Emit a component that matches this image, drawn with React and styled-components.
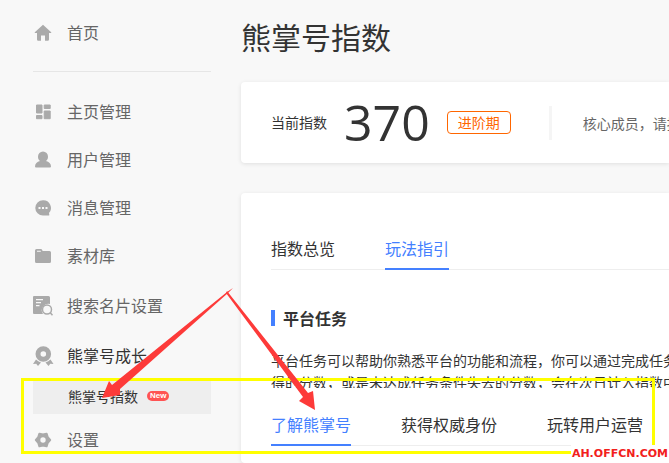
import React from 'react'
import styled, { createGlobalStyle } from 'styled-components'

const GlobalStyle = createGlobalStyle`
  * { box-sizing: border-box; }
  body {
    margin: 0;
    background: #f8f8f8;
    color: #333;
    font-family: 'Noto Sans CJK SC', sans-serif;
    font-size: 16px;
    overflow: hidden;
  }
  button { font: inherit; color: inherit; background: none; border: 0; padding: 0; cursor: pointer; }
  a { color: inherit; text-decoration: none; }
`

const icons = {
  home: <path d="M10 1.800 1.800 9.200q-.4.8.6.9H4v6.400q0 1.300 1.300 1.300H8v-5.300h4v5.300h2.700q1.300 0 1.300-1.300v-6.400h1.600q1-.1.6-.9Z" />,
  board: (
    <path
      stroke="#aaa"
      strokeLinejoin="round"
      d="M3.500 3h5.500v8h-5.500zM11.200 3h6v3.500h-6zM3.500 13.500h5.500v3.200h-5.500zM11.200 9h6v7.700h-6z"
    />
  ),
  user: <path d="M10 1.500a5 5 0 0 1 5 5.200c0 2-.8 3.500-2 4.300 3 .7 5 2.700 5 5.500q0 1-1 1H3q-1 0-1-1c0-2.800 2-4.800 5-5.500-1.200-.8-2-2.300-2-4.300a5 5 0 0 1 5-5.200Z" />,
  message: (
    <>
      <path d="M10 2.200a7.700 7.700 0 1 0 0 15.400h5.800q.8 0 .5-.8l-.3-1.800A7.700 7.700 0 0 0 10 2.200Z" />
      <path fill="#f8f8f8" d="M5.500 9h2v2h-2zM9 9h2v2H9zM12.500 9h2v2h-2z" />
    </>
  ),
  folder: (
    <>
      <path d="M3.500 3h4.300q1 0 1.400 1l.4 1H16.500Q18 5 18 6.500v9q0 1.500-1.500 1.500h-13Q2 17 2 15.500v-11Q2 3 3.500 3Z" />
      <path fill="#f8f8f8" d="M4 4.700h3.500l.5 1H4z" />
    </>
  ),
  search: (
    <>
      <path d="M1 0h14.500q1.500 0 1.500 1.500V8a6.500 6.500 0 0 0-7 10H1q-1 0-1-1V1q0-1 1-1Z" />
      <path fill="#f8f8f8" d="M3 3h7v1.300H3zM3 6h5v1.300H3zM3 9h3.500v1.300H3z" />
      <circle cx="14" cy="13.500" r="4.500" fill="none" stroke="#aaa" strokeWidth="1.500" />
      <path fill="none" stroke="#aaa" strokeWidth="1.500" d="m17.300 16.800 2.200 2.400" />
    </>
  ),
  medal: (
    <>
      <circle cx="10.300" cy="8" r="5.300" fill="none" stroke="#aaa" strokeWidth="5" />
      <path d="M3 13.500 0 18l3.200-.2L5 20l3-3.500q-3-.8-5-3ZM17.500 13.500l3 4.500-3.200-.2L15.500 20l-3-3.500q3-.8 5-3Z" />
    </>
  ),
  gear: (
    <>
      <path
        stroke="#aaa"
        strokeWidth="2.400"
        strokeLinejoin="round"
        d="M17 10 14.600 12.600 13.500 16.100 10 15.300 6.500 16.100 5.400 12.600 3 10 5.400 7.400 6.500 3.900 10 4.700 13.500 3.900 14.600 7.400Z"
      />
      <circle cx="10" cy="10" r="2.700" fill="#f8f8f8" />
    </>
  ),
}

const menu = [
  { icon: 'board', label: '主页管理' },
  { icon: 'user', label: '用户管理' },
  { icon: 'message', label: '消息管理' },
  { icon: 'folder', label: '素材库' },
  { icon: 'search', label: '搜索名片设置', tall: true },
  { icon: 'medal', label: '熊掌号成长', open: true },
]

function NavItem({ icon, label, tall, open }) {
  return (
    <NavLink href="#" $tall={tall} $open={open}>
      <NavIcon viewBox="0 0 20 20" aria-hidden="true">{icons[icon]}</NavIcon>
      <NavText>{label}</NavText>
    </NavLink>
  )
}

function Tabs({ items, active }) {
  return (
    <TabBar>
      {items.map((item) => (
        <Tab key={item} $active={item === active}>{item}</Tab>
      ))}
    </TabBar>
  )
}

function App() {
  return (
    <Page>
      <GlobalStyle />
      <Sidebar>
        <NavItem icon="home" label="首页" />
        <Divider />
        {menu.map((item) => <NavItem key={item.label} {...item} />)}
        <SubLink href="#">熊掌号指数<NewTag>New</NewTag></SubLink>
        <NavItem icon="gear" label="设置" tall />
      </Sidebar>
      <Main>
        <Title>熊掌号指数</Title>
        <ScoreCard>
          <Label>当前指数</Label>
          <Score>370</Score>
          <Stage>进阶期</Stage>
          <Member>核心成员，请按</Member>
        </ScoreCard>
        <GuideCard>
          <Tabs items={['指数总览', '玩法指引']} active="玩法指引" />
          <SectionTitle>平台任务</SectionTitle>
          <Intro>
            平台任务可以帮助你熟悉平台的功能和流程，你可以通过完成任务<br />
            得的分数，或是未达成任务条件失去的分数，会在次日计入指数中
          </Intro>
          <Tabs items={['了解熊掌号', '获得权威身份', '玩转用户运营']} active="了解熊掌号" />
        </GuideCard>
      </Main>
      <Highlight />
      <Arrows viewBox="0 0 240 140" aria-hidden="true">
        <path d="M133 8 127 12 12 105 9 101 2 118 20 115 20 109 128 13Z" />
        <path d="M127 11 126 13 203 117 199 121 215 130 213 111 208 113Z" />
      </Arrows>
      <Watermark>AH.OFFCN.COM</Watermark>
    </Page>
  )
}

const Page = styled.div`
  position: relative;
  display: flex;
  height: 100vh;
  overflow: hidden;
`

const Sidebar = styled.nav`
  flex: 0 0 211px;
  padding: 9px 0 0 33px;
`

const NavLink = styled.a`
  display: flex;
  align-items: center;
  gap: 14px;
  height: ${(p) => (p.$tall ? 52 : 48)}px;
  color: ${(p) => (p.$open ? '#333' : '#666')};
`

const NavIcon = styled.svg`
  width: 20px;
  height: 20px;
  fill: #aaa;
  overflow: visible;
`

const NavText = styled.span`
  padding-bottom: 2px;
`

const Divider = styled.hr`
  margin: 14px 0 16px;
  border: 0;
  border-top: 1px solid #e6e6e6;
`

const SubLink = styled.a`
  display: flex;
  align-items: center;
  gap: 9px;
  height: 34px;
  padding: 0 0 2px 35px;
  background: #eee;
  font-size: 14px;
`

const NewTag = styled.span`
  padding: 0 3px;
  border-radius: 5px;
  background: #ff5353;
  color: #fff;
  font: bold 8px/10px 'Liberation Sans', sans-serif;
`

const Main = styled.main`
  flex: 1;
  display: flex;
  flex-direction: column;
  min-width: 0;
  padding-left: 30px;
  white-space: nowrap;
`

const Title = styled.h1`
  margin: 14px 0 24px;
  font-size: 30px;
  font-weight: 400;
  line-height: 44px;
`

const Card = styled.section`
  padding-left: 30px;
  border-radius: 4px 0 0 4px;
  background: #fff;
  box-shadow: 0 1px 4px rgba(0, 0, 0, 0.1);
`

const ScoreCard = styled(Card)`
  display: flex;
  align-items: center;
  height: 81px;
  margin-bottom: 30px;
  font-size: 14px;
`

const Label = styled.span`
  margin-right: 17px;
  padding-bottom: 2px;
`

const Score = styled.strong`
  margin-right: 17px;
  padding-bottom: 2px;
  font: 400 50px/78px 'Open Sans', sans-serif;
`

const Stage = styled.span`
  padding: 0 10px;
  border: 1px solid #ff6600;
  border-radius: 4px;
  color: #ff6600;
  line-height: 21px;
`

const Member = styled.span`
  margin-left: 38px;
  padding-left: 31px;
  border-left: 3px solid #f5f5f5;
  color: #666;
  line-height: 34px;
`

const GuideCard = styled(Card)`
  flex: 1;
  padding-top: 36px;
`

const TabBar = styled.div`
  display: flex;
  gap: 50px;
  border-bottom: 1px solid #eee;
`

const Tab = styled.button`
  height: 41px;
  margin-bottom: -1px;
  padding-bottom: 2px;
  border-bottom: 2px solid ${(p) => (p.$active ? '#4480ff' : 'transparent')};
  color: ${(p) => (p.$active ? '#4480ff' : '#333')};
`

const SectionTitle = styled.h2`
  display: flex;
  align-items: center;
  gap: 8px;
  margin: 36px 0 19px;
  font-size: 16px;
  line-height: 24px;

  &::before {
    content: '';
    width: 4px;
    height: 16px;
    background: #4480ff;
  }
`

const Intro = styled.p`
  height: 39px;
  margin: 0 0 17px;
  overflow: hidden;
  font-size: 14px;
  line-height: 22px;
`

/* marks drawn over the page */
const Highlight = styled.div`
  position: absolute;
  top: 378px;
  left: 21px;
  right: 14px;
  height: 76px;
  border: 3px solid #ff0;
`

const Arrows = styled.svg`
  position: absolute;
  top: 280px;
  left: 100px;
  width: 240px;
  height: 140px;
  fill: #fd3a39;
`

const Watermark = styled.div`
  position: absolute;
  right: 0;
  bottom: 0;
  padding: 0 1px;
  background: #fff;
  color: #f2201c;
  font: bold 11px/18px 'DejaVu Sans', sans-serif;
`

export default App
